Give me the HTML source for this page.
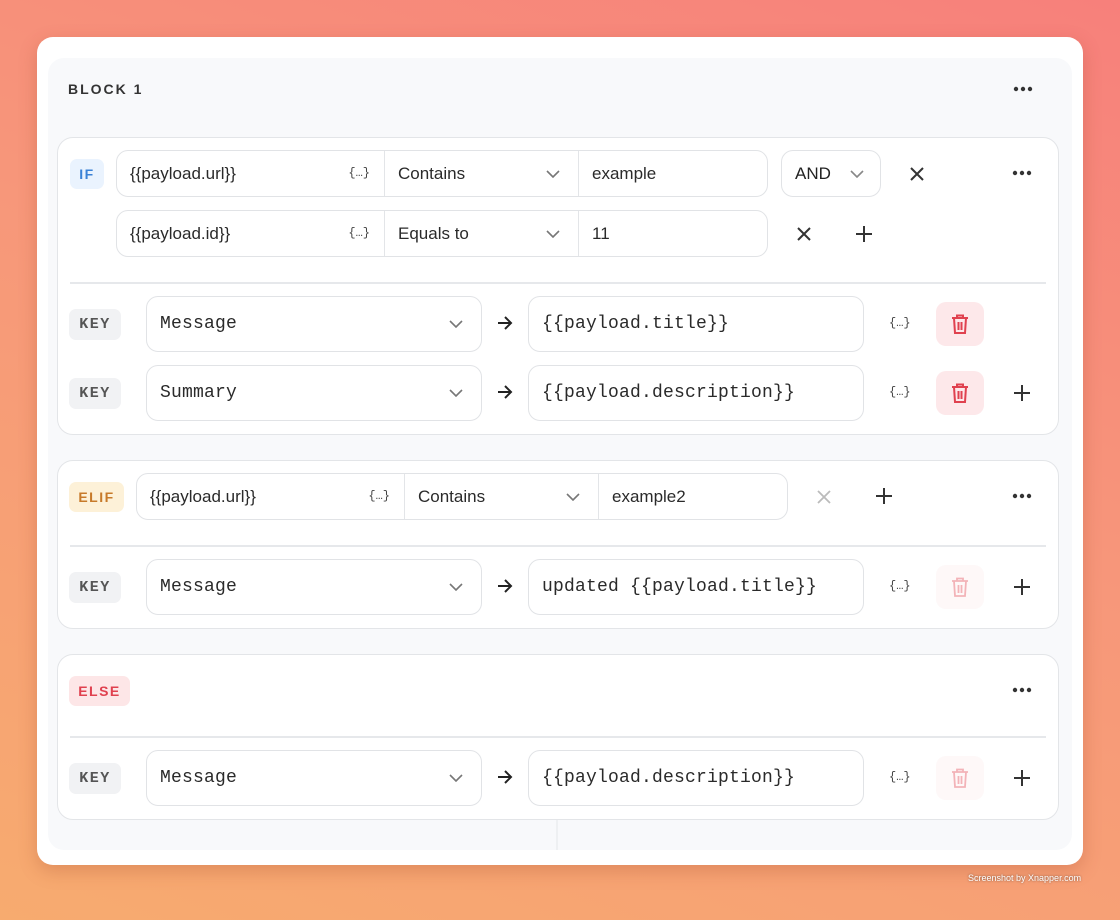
<!DOCTYPE html>
<html><head><meta charset="utf-8">
<style>
*{box-sizing:border-box;margin:0;padding:0}
html,body{width:1120px;height:920px;overflow:hidden}
body{position:relative;background:linear-gradient(200deg,#f7807b 0%,#f7977a 45%,#f7ab6f 100%);font-family:"Liberation Sans",sans-serif;color:#222}
.a{position:absolute}
.card{left:37px;top:37px;width:1046px;height:828px;background:#fff;border-radius:16px;box-shadow:0 6px 18px rgba(150,60,30,.25)}
.panel{left:48px;top:58px;width:1024px;height:792px;background:#f8f9fb;border-radius:16px}
.sec{background:#fff;border:1.5px solid #e3e5e8;border-radius:16px}
.inp{background:#fff;border:1.5px solid #e1e3e6;border-radius:12px}
.grp{background:#fff;border:1.5px solid #e1e3e6;border-radius:12px;display:flex}
.grp>div{position:relative;height:100%;font-size:17px;display:flex;align-items:center;padding-left:13px;color:#2a2a2a}
.grp>div+div{border-left:1.5px solid #e3e5e8}
.div{height:1.5px;background:#e6e8eb}
.badge{font-size:14px;letter-spacing:1.5px;font-weight:bold;border-radius:7px;display:flex;align-items:center;justify-content:center}
.key{background:#f1f2f4;color:#555;font-size:15px;letter-spacing:1.5px;font-family:"Liberation Mono",monospace;font-weight:bold;border-radius:7px;display:flex;align-items:center;justify-content:center;width:52px;height:31px}
.mono{font-family:"Liberation Mono",monospace;font-size:18px;color:#2a2a2a;display:flex;align-items:center;padding-left:13px;font-weight:normal;letter-spacing:0.2px}
.brace{font-size:12px;color:#444;font-family:"Liberation Mono",monospace}
.trash{width:48px;height:44px;border-radius:10px;background:#fde8ea;display:flex;align-items:center;justify-content:center}
</style></head><body>
<div class="a card"></div>
<div class="a panel"></div>
<div class="a" style="left:556px;top:820px;width:2px;height:30px;background:#eef0f2"></div>
<div class="a" style="left:68px;top:81px;font-size:14px;font-weight:bold;letter-spacing:2px;color:#333">BLOCK 1</div>
<svg class="a" style="left:1013px;top:86px" width="20" height="6"><circle cx="3" cy="3" r="2.2" fill="#333"/><circle cx="10" cy="3" r="2.2" fill="#333"/><circle cx="17" cy="3" r="2.2" fill="#333"/></svg>

<!-- IF section -->
<div class="a sec" style="left:57px;top:137px;width:1002px;height:298px"></div>
<div class="a badge" style="left:70px;top:159px;width:34px;height:30px;background:#eaf3fe;color:#3b82d6">IF</div>
<div class="a grp" style="left:116px;top:150px;width:652px;height:47px">
 <div style="width:267px">{{payload.url}}<span class="a brace" style="right:14px;top:15px">{…}</span></div>
 <div style="width:194px">Contains<svg class="a" style="right:18px;top:19px" width="14" height="8"><path d="M1 1l6 6 6-6" stroke="#777" stroke-width="1.6" fill="none"/></svg></div>
 <div style="flex:1">example</div>
</div>
<div class="a inp" style="left:781px;top:150px;width:100px;height:47px;display:flex;align-items:center;padding-left:13px;font-size:17px">AND<svg class="a" style="right:16px;top:19px" width="14" height="8"><path d="M1 1l6 6 6-6" stroke="#888" stroke-width="1.6" fill="none"/></svg></div>
<svg class="a" style="left:909px;top:166px" width="16" height="16"><path d="M2 2l12 12M14 2L2 14" stroke="#333" stroke-width="2"/></svg>
<svg class="a" style="left:1012px;top:170px" width="20" height="6"><circle cx="3" cy="3" r="2.2" fill="#333"/><circle cx="10" cy="3" r="2.2" fill="#333"/><circle cx="17" cy="3" r="2.2" fill="#333"/></svg>

<div class="a grp" style="left:116px;top:210px;width:652px;height:47px">
 <div style="width:267px">{{payload.id}}<span class="a brace" style="right:14px;top:15px">{…}</span></div>
 <div style="width:194px">Equals to<svg class="a" style="right:18px;top:19px" width="14" height="8"><path d="M1 1l6 6 6-6" stroke="#777" stroke-width="1.6" fill="none"/></svg></div>
 <div style="flex:1">11</div>
</div>
<svg class="a" style="left:796px;top:226px" width="16" height="16"><path d="M2 2l12 12M14 2L2 14" stroke="#333" stroke-width="2"/></svg>
<svg class="a" style="left:855px;top:225px" width="18" height="18"><path d="M9 1v16M1 9h16" stroke="#333" stroke-width="2"/></svg>
<div class="a div" style="left:70px;top:282px;width:976px"></div>

<!-- KEY rows -->
<div class="a key" style="left:69px;top:309px">KEY</div>
<div class="a inp mono" style="left:146px;top:296px;width:336px;height:56px">Message<svg class="a" style="right:18px;top:23px" width="14" height="8"><path d="M1 1l6 6 6-6" stroke="#777" stroke-width="1.6" fill="none"/></svg></div>
<svg class="a" style="left:497px;top:316px" width="16" height="14"><path d="M1 7h13M8 1l6 6-6 6" stroke="#222" stroke-width="2" fill="none"/></svg>
<div class="a inp mono" style="left:528px;top:296px;width:336px;height:56px">{{payload.title}}</div>
<span class="a brace" style="left:889px;top:316px">{…}</span>
<div class="a trash" style="left:936px;top:302px"><svg width="20" height="22"><path d="M2 5h16M7 5V2.5h6V5M4 5l1 15h10l1-15M8.5 9v8M11.5 9v8" stroke="#e0414f" stroke-width="2" fill="none"/></svg></div>

<div class="a key" style="left:69px;top:378px">KEY</div>
<div class="a inp mono" style="left:146px;top:365px;width:336px;height:56px">Summary<svg class="a" style="right:18px;top:23px" width="14" height="8"><path d="M1 1l6 6 6-6" stroke="#777" stroke-width="1.6" fill="none"/></svg></div>
<svg class="a" style="left:497px;top:385px" width="16" height="14"><path d="M1 7h13M8 1l6 6-6 6" stroke="#222" stroke-width="2" fill="none"/></svg>
<div class="a inp mono" style="left:528px;top:365px;width:336px;height:56px">{{payload.description}}</div>
<span class="a brace" style="left:889px;top:385px">{…}</span>
<div class="a trash" style="left:936px;top:371px"><svg width="20" height="22"><path d="M2 5h16M7 5V2.5h6V5M4 5l1 15h10l1-15M8.5 9v8M11.5 9v8" stroke="#e0414f" stroke-width="2" fill="none"/></svg></div>
<svg class="a" style="left:1013px;top:384px" width="18" height="18"><path d="M9 1v16M1 9h16" stroke="#333" stroke-width="2"/></svg>

<!-- ELIF -->
<div class="a sec" style="left:57px;top:460px;width:1002px;height:169px"></div>
<div class="a badge" style="left:69px;top:482px;width:55px;height:30px;background:#fdf1d8;color:#c77a2a">ELIF</div>
<div class="a grp" style="left:136px;top:473px;width:652px;height:47px">
 <div style="width:267px">{{payload.url}}<span class="a brace" style="right:14px;top:15px">{…}</span></div>
 <div style="width:194px">Contains<svg class="a" style="right:18px;top:19px" width="14" height="8"><path d="M1 1l6 6 6-6" stroke="#777" stroke-width="1.6" fill="none"/></svg></div>
 <div style="flex:1">example2</div>
</div>
<svg class="a" style="left:816px;top:489px" width="16" height="16"><path d="M2 2l12 12M14 2L2 14" stroke="#bbb" stroke-width="1.8"/></svg>
<svg class="a" style="left:875px;top:487px" width="18" height="18"><path d="M9 1v16M1 9h16" stroke="#333" stroke-width="2"/></svg>
<svg class="a" style="left:1012px;top:493px" width="20" height="6"><circle cx="3" cy="3" r="2.2" fill="#333"/><circle cx="10" cy="3" r="2.2" fill="#333"/><circle cx="17" cy="3" r="2.2" fill="#333"/></svg>
<div class="a div" style="left:70px;top:545px;width:976px"></div>
<div class="a key" style="left:69px;top:572px">KEY</div>
<div class="a inp mono" style="left:146px;top:559px;width:336px;height:56px">Message<svg class="a" style="right:18px;top:23px" width="14" height="8"><path d="M1 1l6 6 6-6" stroke="#777" stroke-width="1.6" fill="none"/></svg></div>
<svg class="a" style="left:497px;top:579px" width="16" height="14"><path d="M1 7h13M8 1l6 6-6 6" stroke="#222" stroke-width="2" fill="none"/></svg>
<div class="a inp mono" style="left:528px;top:559px;width:336px;height:56px">updated {{payload.title}}</div>
<span class="a brace" style="left:889px;top:579px">{…}</span>
<div class="a trash" style="left:936px;top:565px;background:#fef8f8"><svg width="20" height="22"><path d="M2 5h16M7 5V2.5h6V5M4 5l1 15h10l1-15M8.5 9v8M11.5 9v8" stroke="#f3b3b8" stroke-width="1.8" fill="none"/></svg></div>
<svg class="a" style="left:1013px;top:578px" width="18" height="18"><path d="M9 1v16M1 9h16" stroke="#333" stroke-width="2"/></svg>

<!-- ELSE -->
<div class="a sec" style="left:57px;top:654px;width:1002px;height:166px"></div>
<div class="a badge" style="left:69px;top:676px;width:61px;height:30px;background:#fde6e7;color:#e0414f">ELSE</div>
<svg class="a" style="left:1012px;top:687px" width="20" height="6"><circle cx="3" cy="3" r="2.2" fill="#333"/><circle cx="10" cy="3" r="2.2" fill="#333"/><circle cx="17" cy="3" r="2.2" fill="#333"/></svg>
<div class="a div" style="left:70px;top:736px;width:976px"></div>
<div class="a key" style="left:69px;top:763px">KEY</div>
<div class="a inp mono" style="left:146px;top:750px;width:336px;height:56px">Message<svg class="a" style="right:18px;top:23px" width="14" height="8"><path d="M1 1l6 6 6-6" stroke="#777" stroke-width="1.6" fill="none"/></svg></div>
<svg class="a" style="left:497px;top:770px" width="16" height="14"><path d="M1 7h13M8 1l6 6-6 6" stroke="#222" stroke-width="2" fill="none"/></svg>
<div class="a inp mono" style="left:528px;top:750px;width:336px;height:56px">{{payload.description}}</div>
<span class="a brace" style="left:889px;top:770px">{…}</span>
<div class="a trash" style="left:936px;top:756px;background:#fef8f8"><svg width="20" height="22"><path d="M2 5h16M7 5V2.5h6V5M4 5l1 15h10l1-15M8.5 9v8M11.5 9v8" stroke="#f3b3b8" stroke-width="1.8" fill="none"/></svg></div>
<svg class="a" style="left:1013px;top:769px" width="18" height="18"><path d="M9 1v16M1 9h16" stroke="#333" stroke-width="2"/></svg>

<div class="a" style="left:968px;top:873px;font-size:9px;color:#fff;text-shadow:0 0 2px rgba(0,0,0,.5)">Screenshot by Xnapper.com</div>
</body></html>
